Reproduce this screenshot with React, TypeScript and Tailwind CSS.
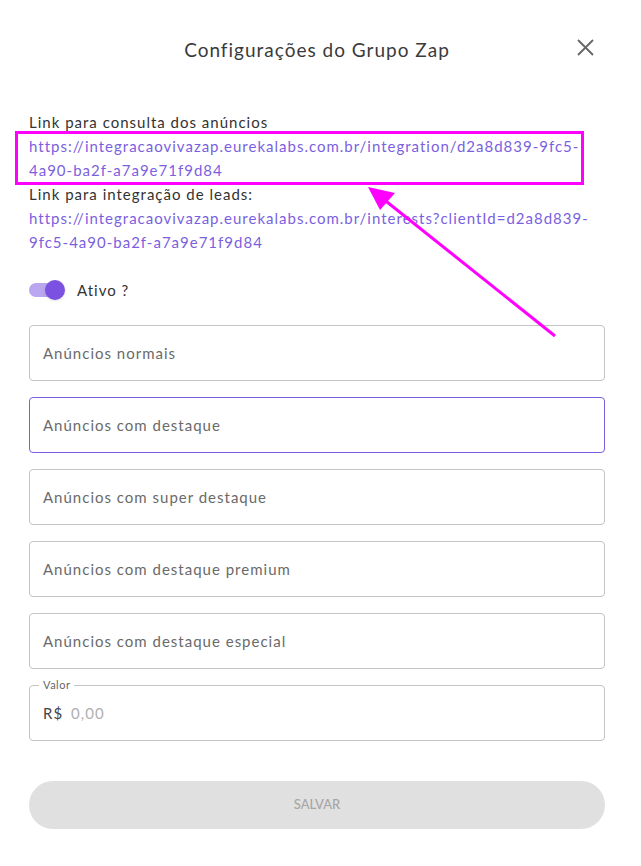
const fields = [
  "Anúncios normais",
  "Anúncios com destaque",
  "Anúncios com super destaque",
  "Anúncios com destaque premium",
  "Anúncios com destaque especial",
];

export default function App() {
  return (
    <div
      className="relative min-h-[866px] w-[641px] bg-white pl-[29px] pr-[36px] tracking-[1px] text-[#333]"
      style={{ fontFamily: "Lato, 'Open Sans', sans-serif" }}
    >
      {/* Header */}
      <div className="relative flex h-[100px] items-start justify-center pt-[36px]">
        <h1 className="text-[19px] leading-[28px] text-[#3a3a3a]">
          Configurações do Grupo Zap
        </h1>
        <button className="absolute right-[11px] top-[39px] text-[#666]">
          <svg width="17" height="17" viewBox="0 0 17 17">
            <path d="M1 1L16 16M16 1L1 16" stroke="currentColor" strokeWidth="1.8" />
          </svg>
        </button>
      </div>

      {/* Links */}
      <div className="text-[15px] leading-[24px]">
        <p className="pt-[10px]">Link para consulta dos anúncios</p>
        <div className="relative">
          <a className="block text-[#7b5fe0]">
            https://integracaovivazap.eurekalabs.com.br/integration/d2a8d839-9fc5-
            <br />
            4a90-ba2f-a7a9e71f9d84
          </a>
          <div className="pointer-events-none absolute left-[-14px] right-[21px] top-[-3px] bottom-[-3px] border-[3px] border-[#ff00ff]" />
        </div>
        <p>Link para integração de leads:</p>
        <a className="block text-[#7b5fe0]">
          https://integracaovivazap.eurekalabs.com.br/interests?clientId=d2a8d839-
          <br />
          9fc5-4a90-ba2f-a7a9e71f9d84
        </a>
      </div>

      {/* Toggle */}
      <div className="mt-[24px] flex h-[24px] items-center">
        <div className="relative h-[14px] w-[32px] rounded-full bg-[#b9a6ef]">
          <div className="absolute right-[-4px] top-[-3px] h-[20px] w-[20px] rounded-full bg-[#7a51e0] shadow" />
        </div>
        <span className="ml-[16px] text-[15px] text-[#333]">Ativo ?</span>
      </div>

      {/* Inputs */}
      <div className="mt-[23px] flex flex-col gap-[16px]">
        {fields.map((f, i) => (
          <div
            key={f}
            className={`flex h-[56px] items-center rounded-[4px] border px-[13px] text-[15px] text-[#6a6a6a] ${
              i === 1 ? "border-[#7b5fe0]" : "border-[#c4c4c4]"
            }`}
          >
            {f}
          </div>
        ))}

        <div className="relative flex h-[56px] items-center rounded-[4px] border border-[#c4c4c4] px-[13px] text-[15px]">
          <span className="absolute left-[9px] top-[-8px] bg-white px-[4px] text-[11px] leading-[14px] tracking-[0.5px] text-[#666]">
            Valor
          </span>
          <span className="text-[#444]">R$</span>
          <span className="ml-[8px] text-[#b0b0b0]">0,00</span>
        </div>
      </div>

      {/* Save */}
      <button className="mt-[40px] flex h-[48px] w-full items-center justify-center rounded-full bg-[#e0e0e0] text-[13px] font-medium tracking-normal text-[#a6a6a6]">
        SALVAR
      </button>

      {/* Annotation arrow */}
      <svg
        className="pointer-events-none absolute left-0 top-0"
        width="641"
        height="866"
      >
        <line x1="555" y1="336" x2="382" y2="198" stroke="#ff00ff" strokeWidth="3" />
        <polygon points="368,187 395,193 380,210" fill="#ff00ff" />
      </svg>
    </div>
  );
}
